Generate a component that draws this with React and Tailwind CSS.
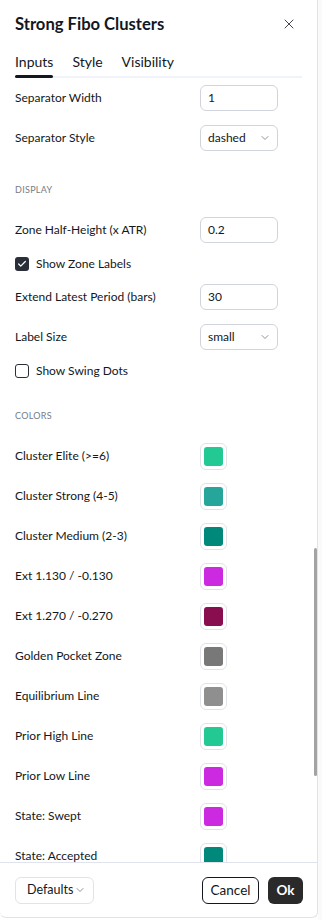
import { ChevronDown, Check, X } from "lucide-react";

const colorRows = [
  { label: "Cluster Elite (>=6)", color: "#22c993" },
  { label: "Cluster Strong (4-5)", color: "#26a69a" },
  { label: "Cluster Medium (2-3)", color: "#00897b" },
  { label: "Ext 1.130 / -0.130", color: "#cc2ae0" },
  { label: "Ext 1.270 / -0.270", color: "#880e4f" },
  { label: "Golden Pocket Zone", color: "#787878" },
  { label: "Equilibrium Line", color: "#8f8f8f" },
  { label: "Prior High Line", color: "#22c993" },
  { label: "Prior Low Line", color: "#cc2ae0" },
  { label: "State: Swept", color: "#cc2ae0" },
  { label: "State: Accepted", color: "#00897b" },
];

const Row = ({ label, children }) => (
  <div className="flex h-[40px] items-center">
    <div className="w-[185px] text-[12px] text-[#131722]">{label}</div>
    {children}
  </div>
);

const TextInput = ({ value }) => (
  <div className="flex h-[26px] w-[78px] items-center rounded-md border border-[#d1d4dc] pl-[7px] text-[12px] text-[#131722]">
    {value}
  </div>
);

const SelectBox = ({ value }) => (
  <div className="flex h-[26px] w-[78px] items-center justify-between rounded-md border border-[#d1d4dc] pl-[7px] pr-[6px] text-[12px] text-[#131722]">
    <span>{value}</span>
    <ChevronDown size={12} strokeWidth={1.5} className="text-[#6a6d78]" />
  </div>
);

const CheckRow = ({ label, checked }) => (
  <div className="flex h-[27px] items-center gap-[7px]">
    {checked ? (
      <div className="flex h-[14px] w-[14px] items-center justify-center rounded-[3px] bg-[#2a2e39]">
        <Check size={10} strokeWidth={3} className="text-white" />
      </div>
    ) : (
      <div className="h-[14px] w-[14px] rounded-[3px] border border-[#2a2e39]" />
    )}
    <span className="text-[12px] text-[#131722]">{label}</span>
  </div>
);

const SectionTitle = ({ children }) => (
  <div className="pb-[14px] pt-[26px] text-[9px] leading-[12px] tracking-[0.3px] text-[#787b86]">
    {children}
  </div>
);

const Swatch = ({ color }) => (
  <div className="flex h-[27px] w-[27px] items-center justify-center rounded-md border border-[#e0e3eb]">
    <div className="h-[19px] w-[19px] rounded-[3px]" style={{ backgroundColor: color }} />
  </div>
);

export default function App() {
  return (
    <div className="flex h-[920px] w-[322px] bg-white font-['Lato',sans-serif]">
      <div className="relative flex h-[918px] w-[318px] flex-col overflow-hidden rounded-b-md border-r border-b border-[#e0e3eb] bg-white">
        {/* header */}
        <div className="flex h-[48px] items-center justify-between pl-[15px] pr-[20px]">
          <div className="text-[16.6px] font-bold text-[#131722]">Strong Fibo Clusters</div>
          <X size={16} strokeWidth={1.2} className="text-[#131722]" />
        </div>

        {/* tabs */}
        <div className="mx-[15px] flex gap-[19px] border-b-2 border-[#f0f3fa] text-[14px] text-[#131722]">
          <div className="relative pb-[6px] pt-[5px] leading-[17px]">
            Inputs
            <div className="absolute -bottom-[2px] left-0 right-0 h-[3px] rounded-full bg-[#131722]" />
          </div>
          <div className="pb-[6px] pt-[5px] leading-[17px]">Style</div>
          <div className="pb-[6px] pt-[5px] leading-[17px]">Visibility</div>
        </div>

        {/* body */}
        <div className="flex-1 overflow-hidden px-[15px]">
          <Row label="Separator Width">
            <TextInput value="1" />
          </Row>
          <Row label="Separator Style">
            <SelectBox value="dashed" />
          </Row>

          <SectionTitle>DISPLAY</SectionTitle>
          <Row label="Zone Half-Height (x ATR)">
            <TextInput value="0.2" />
          </Row>
          <CheckRow label="Show Zone Labels" checked />
          <Row label="Extend Latest Period (bars)">
            <TextInput value="30" />
          </Row>
          <Row label="Label Size">
            <SelectBox value="small" />
          </Row>
          <CheckRow label="Show Swing Dots" />

          <SectionTitle>COLORS</SectionTitle>
          {colorRows.map((r, i) => (
            <Row key={i} label={r.label}>
              <Swatch color={r.color} />
            </Row>
          ))}
        </div>

        {/* footer */}
        <div className="flex h-[55px] shrink-0 items-center justify-between border-t border-[#e0e3eb] pl-[15px] pr-[14px]">
          <div className="flex h-[27px] w-[79px] shrink-0 items-center justify-between rounded-md border border-[#e0e3eb] pl-[11px] pr-[7px] text-[12.5px] text-[#131722]">
            <span>Defaults</span>
            <ChevronDown size={12} strokeWidth={1.5} className="shrink-0 text-[#6a6d78]" />
          </div>
          <div className="flex gap-[9px]">
            <div className="flex h-[27px] w-[57px] items-center justify-center rounded-md border border-[#131722] text-[13.5px] text-[#131722]">
              Cancel
            </div>
            <div className="flex h-[27px] w-[35px] items-center justify-center rounded-md bg-[#2a2a2a] text-[13.5px] font-bold text-white">
              Ok
            </div>
          </div>
        </div>

        {/* scrollbar */}
        <div className="absolute right-[0px] top-[548px] h-[228px] w-[3px] rounded-full bg-[#a3a3a3]" />
      </div>
      <div className="flex-1 bg-[#fafafa]" />
    </div>
  );
}
